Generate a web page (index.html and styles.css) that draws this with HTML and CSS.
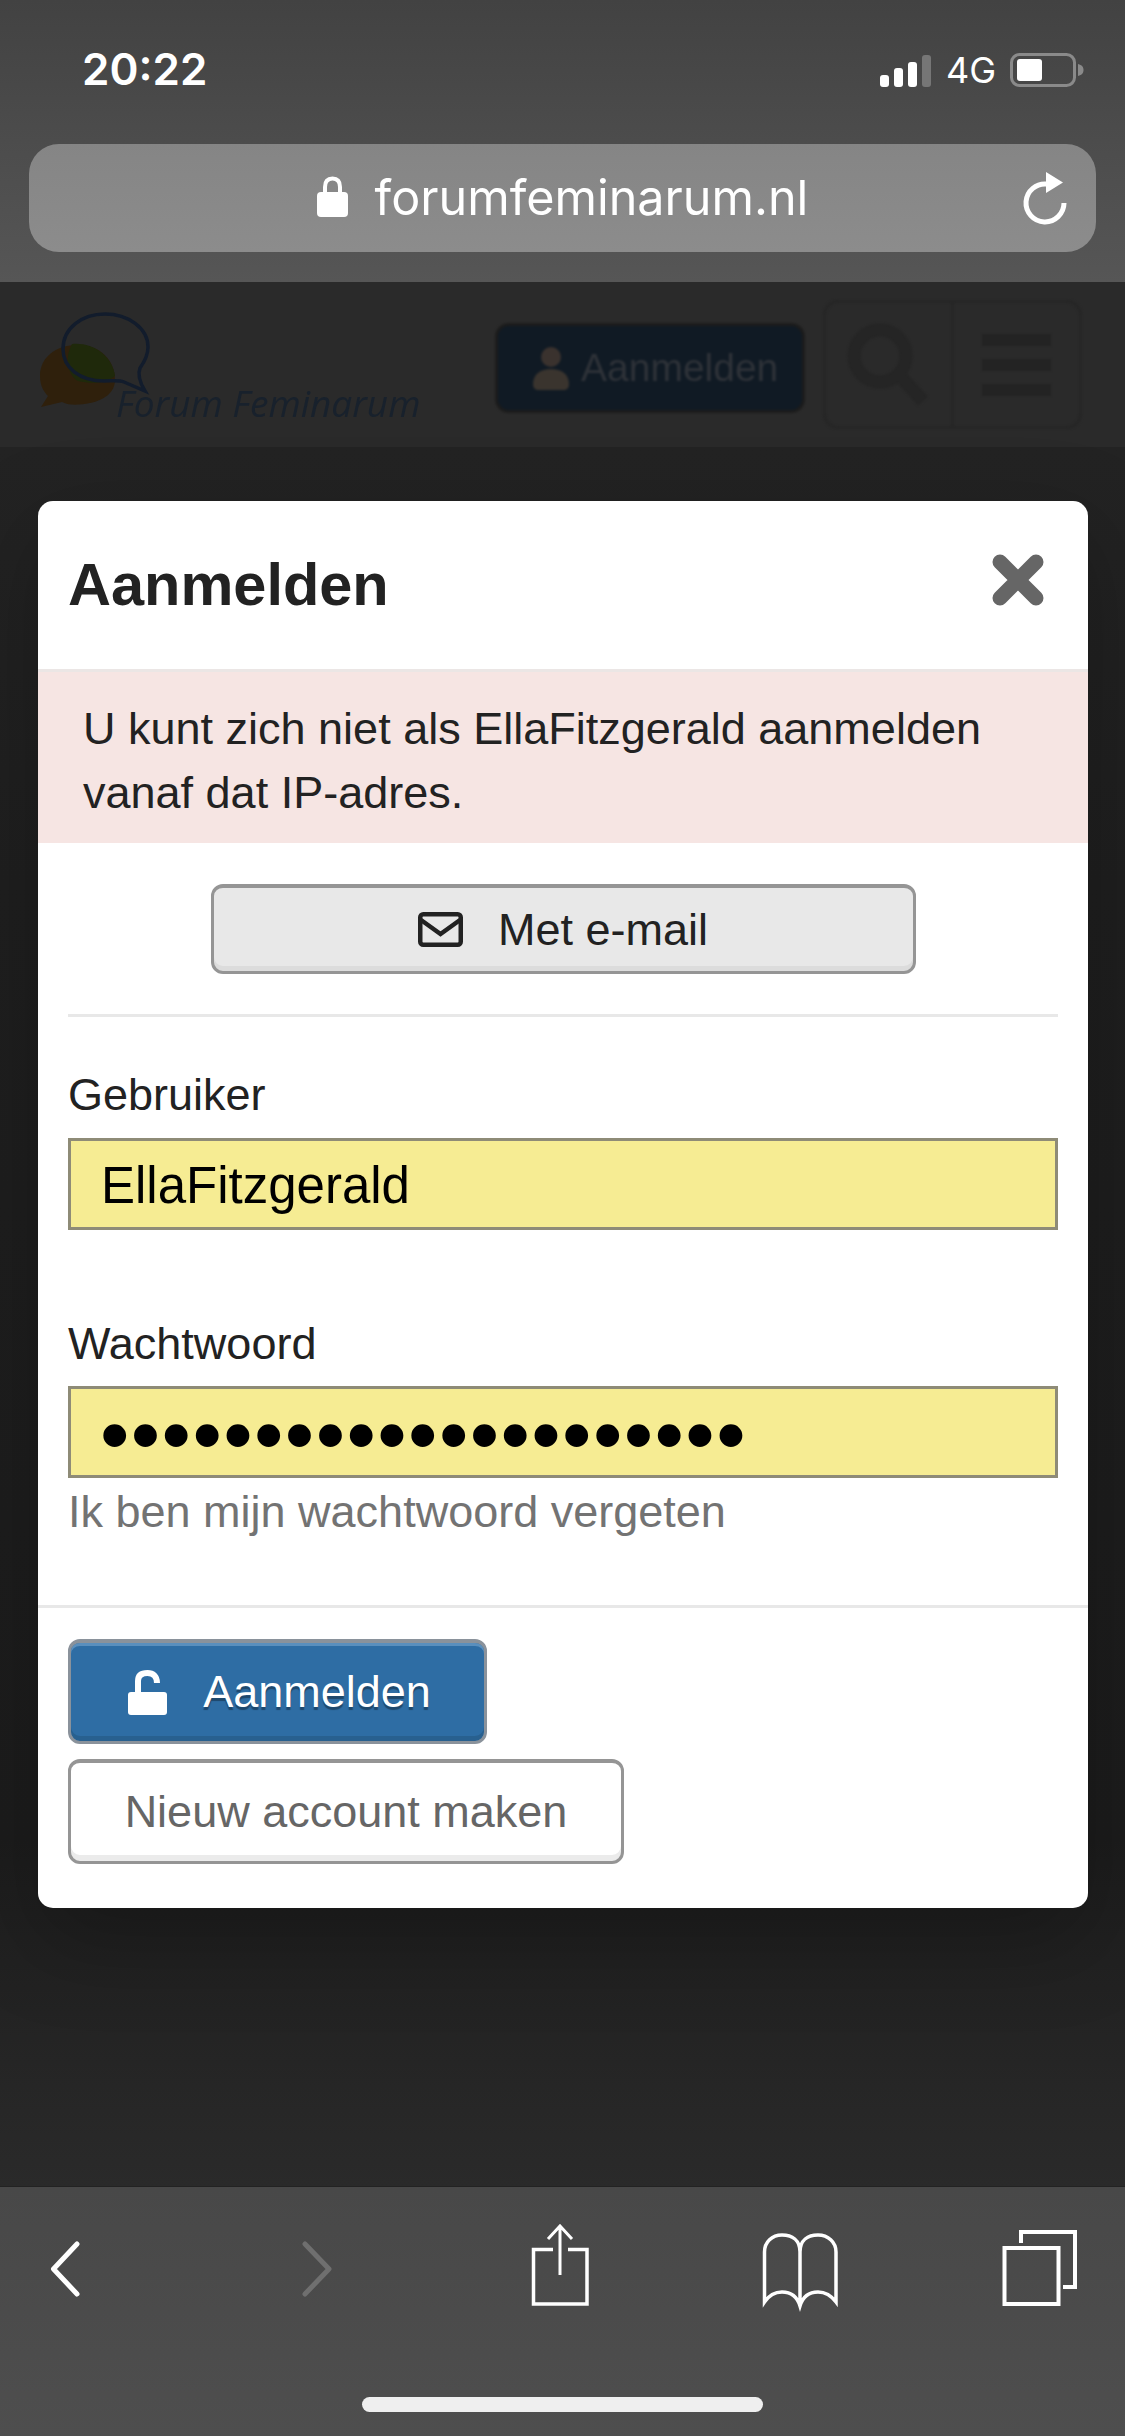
FILE: index.html
```html
<!DOCTYPE html>
<html lang="nl">
<head>
  <meta charset="UTF-8">
  <title>Aanmelden - Forum Feminarum</title>
  <link rel="stylesheet" href="styles.css">
</head>
<body>

<div class="browser-top">
  <div class="status-bar">
    <span class="time">20:22</span>
    <div class="status-right">
      <svg class="signal" width="51" height="32" viewBox="0 0 51 32">
        <rect x="0" y="20" width="9" height="12" rx="3" fill="#fff"/>
        <rect x="14" y="13" width="9" height="19" rx="3" fill="#fff"/>
        <rect x="28" y="7" width="9" height="25" rx="3" fill="#fff"/>
        <rect x="42" y="0" width="9" height="32" rx="3" fill="#767676"/>
      </svg>
      <span class="network">4G</span>
      <svg class="battery" width="74" height="34" viewBox="0 0 74 34">
        <rect x="1.500" y="1.500" width="63" height="31" rx="8" fill="none" stroke="#8a8a8a" stroke-width="3"/>
        <rect x="7" y="6" width="25" height="22" rx="3" fill="#fff"/>
        <path d="M68 11 C72 12 73.500 14 73.500 17 C73.500 20 72 22 68 23 Z" fill="#8a8a8a"/>
      </svg>
    </div>
  </div>

  <div class="url-bar">
    <div class="url-center">
      <svg width="31" height="41" viewBox="0 0 31 41">
        <path d="M8 18 V11 C8 5 11 2.500 15.500 2.500 C20 2.500 23 5 23 11 V18" fill="none" stroke="#fff" stroke-width="4"/>
        <rect x="0" y="16" width="31" height="25" rx="4" fill="#fff"/>
      </svg>
      <span class="url-text">forumfeminarum.nl</span>
    </div>
    <svg class="reload" width="46" height="54" viewBox="1023 171 46 54">
      <path d="M1065 203 A19 19 0 1 1 1048 184" fill="none" stroke="#fff" stroke-width="5"/>
      <path d="M1047 172 L1064 182.500 L1047 193 Z" fill="#fff"/>
    </svg>
  </div>
</div>

<div class="site-header">
  <svg class="logo" width="390" height="126" viewBox="40 312 390 126">
    <path d="M78 345 C55 345 40 358 40 376 C40 386 44 392 48 396 L41 407 L62 402 C70 406 80 405 90 403 C105 400 115 392 115 380 C115 360 100 345 78 345 Z" fill="#2f200c"/>
    <path d="M72 344 C92 342 112 355 115 376 C105 384 90 384 78 381 C68 376 64 358 72 344 Z" fill="#1f290b"/>
    <path d="M105 314 C82 314 63 328 63 349 C63 368 80 381 104 381 C112 381 119 380 124 382 L145 391 C139 381 138 373 140 368 C145 361 148 355 148 347 C148 328 128 314 105 314 Z" fill="none" stroke="#121c2c" stroke-width="3.500"/>
    <text class="logo-text" x="116" y="417">Forum Feminarum</text>
  </svg>
  <div class="site-actions">
    <div class="site-login">
      <svg width="36" height="44" viewBox="0 0 36 44">
        <circle cx="18" cy="11" r="10" fill="#3a322e"/>
        <path d="M0 38 C0 28 8 23 18 23 C28 23 36 28 36 38 C36 42 34 44 30 44 H6 C2 44 0 42 0 38 Z" fill="#3a342e"/>
      </svg>
      <span>Aanmelden</span>
    </div>
    <div class="site-tools">
      <div class="tool">
        <svg width="84" height="84" viewBox="0 0 84 84">
          <circle cx="33" cy="33" r="26" fill="none" stroke="#252525" stroke-width="13"/>
          <path d="M52 52 L76 78" stroke="#252525" stroke-width="13"/>
        </svg>
      </div>
      <div class="tool tool-menu">
        <span class="menu-bar"></span>
        <span class="menu-bar"></span>
        <span class="menu-bar"></span>
      </div>
    </div>
  </div>
</div>

<div class="backdrop">
  <div class="modal">
    <div class="modal-head">
      <h1>Aanmelden</h1>
      <svg class="close" width="54" height="54" viewBox="0 0 54 54">
        <path d="M9 9 L45 45 M45 9 L9 45" stroke="#666" stroke-width="15" stroke-linecap="round"/>
      </svg>
    </div>

    <div class="alert">U kunt zich niet als EllaFitzgerald aanmelden vanaf dat IP-adres.</div>

    <div class="modal-body">
      <div class="btn btn-email">
        <svg width="45" height="35" viewBox="0 0 45 35">
          <rect x="2.250" y="2.250" width="40.500" height="30.500" rx="3" fill="none" stroke="#222" stroke-width="4.500"/>
          <path d="M3 8 L22.500 22 L42 8" fill="none" stroke="#222" stroke-width="4.500"/>
        </svg>
        <span>Met e-mail</span>
      </div>

      <div class="divider"></div>

      <label class="field-label">Gebruiker</label>
      <div class="field">EllaFitzgerald</div>

      <label class="field-label field-label-next">Wachtwoord</label>
      <div class="field field-password">•••••••••••••••••••••</div>
      <div class="forgot">Ik ben mijn wachtwoord vergeten</div>
    </div>

    <div class="modal-foot">
      <div class="btn btn-primary">
        <svg width="39" height="45" viewBox="0 0 39 45">
          <path d="M10 26 V11 C10 5 14 3 19.500 3 C25 3 29 6 29 13" fill="none" stroke="#fff" stroke-width="6"/>
          <rect x="0" y="22" width="39" height="23" rx="3" fill="#fff"/>
        </svg>
        <span>Aanmelden</span>
      </div>
      <div class="btn btn-plain">Nieuw account maken</div>
    </div>
  </div>
</div>

<div class="browser-bottom">
  <div class="toolbar">
    <svg width="120" height="90" viewBox="5 2224 120 90">
      <path d="M77 2244 L53.500 2269 L77 2294" fill="none" stroke="#fff" stroke-width="5" stroke-linecap="round" stroke-linejoin="round"/>
    </svg>
    <svg width="120" height="90" viewBox="256 2224 120 90">
      <path d="M305 2244 L329 2269 L305 2294" fill="none" stroke="#6f6f6f" stroke-width="5" stroke-linecap="round" stroke-linejoin="round"/>
    </svg>
    <svg width="120" height="90" viewBox="500 2224 120 90">
      <path d="M553 2249.500 H533.500 V2304 H587 V2249.500 H568" fill="none" stroke="#fff" stroke-width="3.500"/>
      <path d="M560 2275 V2226 M548 2239 L560 2226 L572 2239" fill="none" stroke="#fff" stroke-width="3"/>
    </svg>
    <svg width="120" height="90" viewBox="740 2224 120 90">
      <path d="M800 2306 V2252 C800 2240 792 2235 782 2235 C772 2235 764.500 2242 764.500 2252 V2302 C770 2294 776 2292 782 2292 C790 2292 797 2296 800 2306 C803 2296 810 2292 818 2292 C824 2292 830 2294 836 2302 V2252 C836 2242 828 2235 818 2235 C808 2235 800 2240 800 2252" fill="none" stroke="#fff" stroke-width="3.500"/>
    </svg>
    <svg width="120" height="90" viewBox="980 2224 120 90">
      <rect x="1004.500" y="2248" width="54" height="56" fill="none" stroke="#fff" stroke-width="4"/>
      <path d="M1021 2243 V2232 H1075 V2287 H1063" fill="none" stroke="#fff" stroke-width="4"/>
    </svg>
  </div>
  <div class="home-bar"></div>
</div>

</body>
</html>
```

FILE: styles.css
```css
body {
  margin: 0;
  width: 1125px;
  height: 2436px;
  display: flex;
  flex-direction: column;
  overflow: hidden;
  font-family: "Liberation Sans", Arial, sans-serif;
  font-size: 45px;
  line-height: 64px;
  color: #222;
  background-color: #222;
}

svg {
  display: block;
  flex: none;
}

/* browser chrome, top */
.browser-top {
  height: 282px;
  box-sizing: border-box;
  background: linear-gradient(#424242, #565656);
}

.status-bar {
  height: 144px;
  box-sizing: border-box;
  padding: 46px 41px 0 82px;
  display: flex;
  justify-content: space-between;
  align-items: flex-start;
  color: #fff;
}

.time {
  font-family: Inter, sans-serif;
  font-weight: 600;
  font-size: 44px;
  line-height: 46px;
}

.status-right {
  display: flex;
  align-items: flex-end;
  padding-top: 7px;
}

.network {
  font-family: Inter, sans-serif;
  font-size: 36px;
  line-height: 34px;
  margin: 0 14px 0 15px;
}

.url-bar {
  height: 108px;
  margin: 0 29px;
  padding-right: 28px;
  border-radius: 30px;
  background: linear-gradient(#858585, #8c8c8c);
  display: grid;
  grid-template-columns: 1fr auto;
  align-items: center;
}

.url-center {
  display: flex;
  align-items: center;
  justify-content: center;
  gap: 27px;
  padding-left: 74px;
  color: #fff;
}

.url-center svg {
  margin-top: -3px;
}

.url-text {
  font-family: Inter, sans-serif;
  font-size: 48.500px;
  line-height: 60px;
}

/* dimmed site header behind the dialog */
.site-header {
  height: 165px;
  box-sizing: border-box;
  padding: 18px 43px 0 40px;
  display: flex;
  justify-content: space-between;
  align-items: flex-start;
  background-color: #2a2a2a;
}

.logo {
  margin-top: 12px;
  filter: blur(0.6px);
}

.logo-text {
  font-family: "Open Sans", sans-serif;
  font-style: italic;
  font-size: 37px;
  fill: #18212c;
}

.site-actions {
  display: flex;
  gap: 18px;
  filter: blur(0.8px);
}

.site-login {
  width: 310px;
  height: 90px;
  margin-top: 23px;
  box-sizing: border-box;
  padding-left: 35px;
  display: flex;
  align-items: center;
  gap: 12px;
  border: 3px solid #1c1c1c;
  border-radius: 14px;
  background-color: #101a24;
  color: #2e3238;
  font-size: 39px;
}

.site-tools {
  width: 259px;
  height: 129px;
  box-sizing: border-box;
  display: flex;
  border: 3px solid #262626;
  border-radius: 15px;
}

.tool {
  flex: 1;
  display: flex;
  align-items: center;
  justify-content: center;
}

.tool-menu {
  flex-direction: column;
  gap: 13px;
  border-left: 3px solid #262626;
}

.menu-bar {
  width: 69px;
  height: 12px;
  background-color: #232323;
}

/* dialog */
.backdrop {
  flex: 1;
  box-sizing: border-box;
  padding: 54px 37px 0 38px;
  background: linear-gradient(#232323 0, #1f1f1f 25%, #1c1c1c 80%, #2a2a2a 100%);
}

.modal {
  height: 1407px;
  box-sizing: border-box;
  display: flex;
  flex-direction: column;
  background-color: #fff;
  border-radius: 15px;
  box-shadow: 0 30px 90px rgba(0, 0, 0, 0.25);
}

.modal-head {
  height: 168px;
  box-sizing: border-box;
  padding: 0 43px 0 30px;
  display: flex;
  justify-content: space-between;
  align-items: center;
}

.modal-head h1 {
  margin: 0;
  font-size: 59.500px;
  line-height: 66px;
  font-weight: bold;
}

.close {
  margin-top: -10px;
}

.alert {
  padding: 25px 45px 18px;
  border-top: 3px solid #ebe6e5;
  background-color: #f6e5e3;
}

.modal-body {
  padding: 41px 30px 0;
}

.btn {
  box-sizing: border-box;
  display: flex;
  align-items: center;
  justify-content: center;
  border: 3px solid #959595;
  border-top-width: 4px;
  border-radius: 12px;
}

.btn-email {
  width: 705px;
  height: 90px;
  margin: 0 auto;
  gap: 35px;
  background-color: #e8e8e8;
  box-shadow: inset 0 -5px 0 #dcdcdc;
}

.divider {
  height: 3px;
  margin: 40px 0 46px;
  background-color: #e8e8e8;
}

.field-label {
  display: block;
  margin-bottom: 11px;
}

.field-label-next {
  margin-top: 82px;
  margin-bottom: 10px;
}

.field {
  height: 92px;
  box-sizing: border-box;
  padding-left: 30px;
  border: 3px solid #8e8b77;
  background-color: #f6ec93;
  color: #000;
  font-size: 51px;
  line-height: 90px;
}

.field-password {
  font-size: 84px;
  letter-spacing: 1.400px;
  line-height: 90px;
  padding-left: 29px;
}

.forgot {
  margin-top: 2px;
  color: #737373;
}

.modal-foot {
  margin-top: 61px;
  padding: 31px 30px 0;
  border-top: 3px solid #e8e8e8;
  display: flex;
  flex-direction: column;
  align-items: flex-start;
  gap: 15px;
}

.btn-primary {
  width: 419px;
  height: 105px;
  padding-left: 4px;
  gap: 36px;
  border-color: #8a929b;
  background-color: #2e6da4;
  box-shadow: inset 0 3px 0 #5a8fbd, inset 0 -5px 0 #28608f;
  color: #fff;
  text-shadow: 0 3px 1px rgba(0, 0, 0, 0.35);
}

.btn-plain {
  width: 556px;
  height: 105px;
  background-color: #fff;
  box-shadow: inset 0 -6px 0 #ebebeb;
  color: #666;
}

/* browser chrome, bottom */
.browser-bottom {
  height: 250px;
  box-sizing: border-box;
  padding-top: 37px;
  border-top: 1px solid #222;
  background: linear-gradient(#484848, #4e4e4e);
}

.toolbar {
  height: 90px;
  padding-left: 5px;
  display: grid;
  grid-template-columns: 251px 244px 240px 240px 120px;
}

.home-bar {
  width: 401px;
  height: 15px;
  margin: 83px auto 0;
  border-radius: 8px;
  background-color: #efefef;
}
```
